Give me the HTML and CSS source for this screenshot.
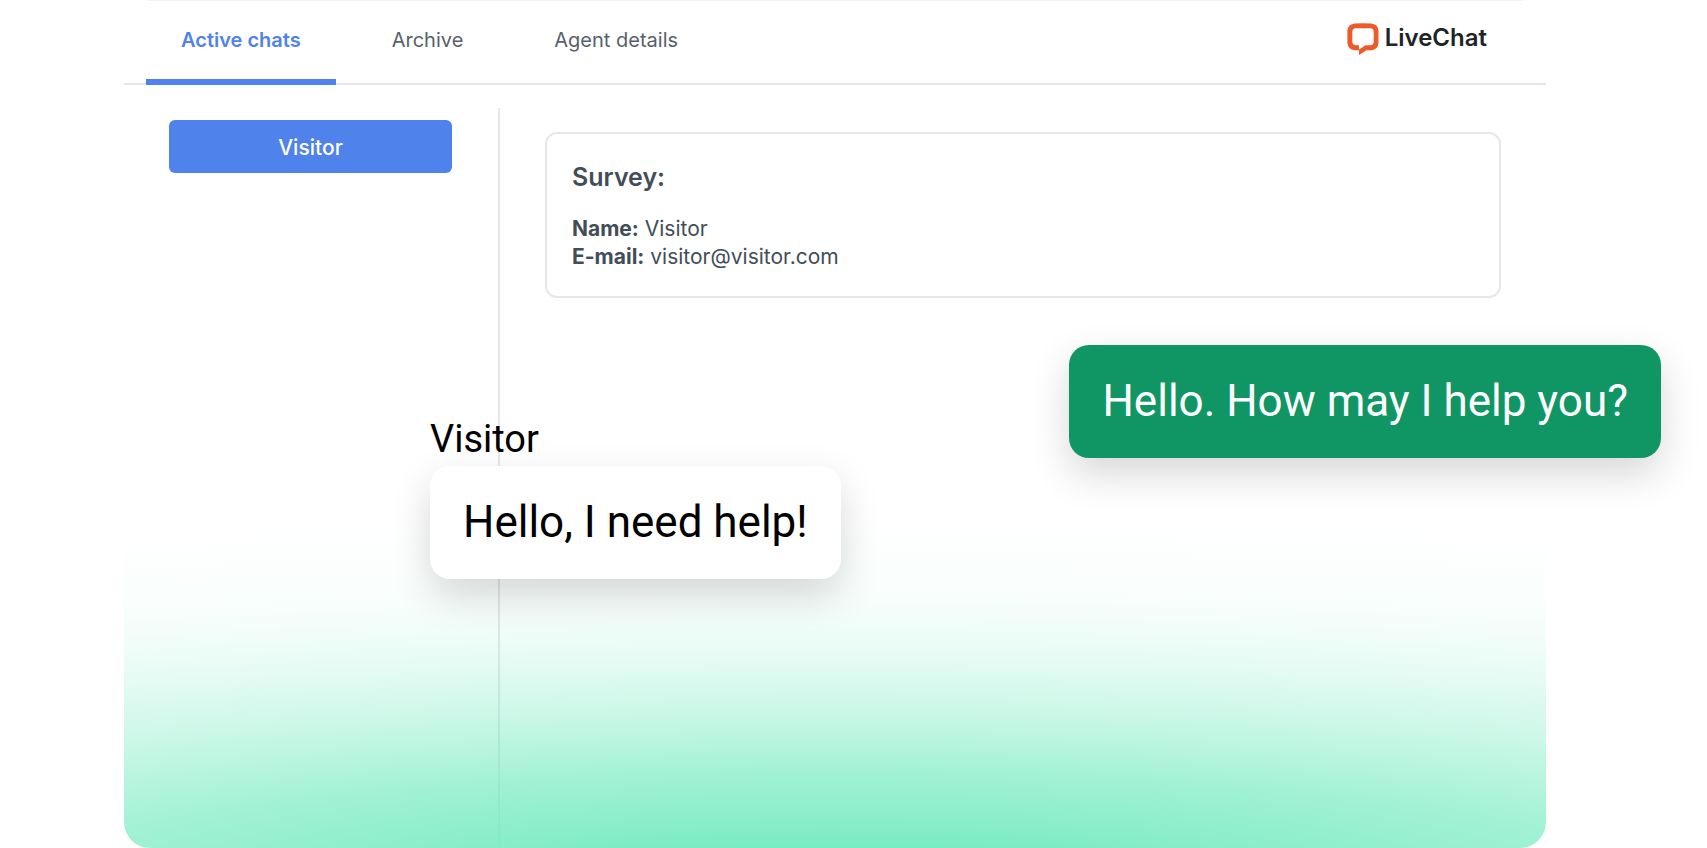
FILE: index.html
```html
<!DOCTYPE html>
<html lang="en">
<head>
<meta charset="utf-8">
<title>LiveChat</title>
<link rel="stylesheet" href="styles.css">
</head>
<body>
<main class="stage">
  <section class="panel">
    <header class="topbar">
      <nav class="tabs">
        <a class="tab tab-active" href="#active">Active chats</a>
        <a class="tab" href="#archive">Archive</a>
        <a class="tab" href="#agent">Agent details</a>
      </nav>
      <a class="logo" href="#home">
        <svg class="logo-mark" viewBox="0 0 32 32" aria-hidden="true">
          <path fill="#ee5a29" fill-rule="evenodd" d="M8 .4Q16 0 24 .4Q31 1 31.500 7.500V20Q31 26.600 24.500 27.200H19.500L12 32V27.200H7.500Q1 26.600 .4 20V7.500Q1 1 8 .4ZM8.500 5.300Q16 5 23.500 5.300Q26.500 5.500 26.700 8.500V19Q26.500 21.800 23.700 22.200H18.500L12 26.500V22.200H8Q5.500 21.800 5.300 19V8.500Q5.500 5.500 8.500 5.300Z"/>
        </svg>
        <span class="logo-name">LiveChat</span>
      </a>
    </header>
    <div class="body">
      <aside class="sidebar">
        <button class="visitor" type="button">Visitor</button>
      </aside>
      <div class="conversation">
        <article class="survey">
          <h2 class="survey-title">Survey:</h2>
          <p class="survey-row"><strong>Name:</strong> Visitor</p>
          <p class="survey-row"><strong>E-mail:</strong> visitor@visitor.com</p>
        </article>
      </div>
    </div>
  </section>
  <div class="message message-visitor">
    <span class="author">Visitor</span>
    <p class="bubble">Hello, I need help!</p>
  </div>
  <div class="message message-agent">
    <p class="bubble bubble-agent">Hello. How may I help you?</p>
  </div>
</main>
</body>
</html>
```
FILE: styles.css
```css
* { box-sizing: border-box; }

body {
  margin: 0;
  background: #fff;
  color: #424d57;
  font-family: Inter, "Liberation Sans", sans-serif;
  font-size: 20px;
}

p, h2 { margin: 0; }

.stage {
  position: relative;
  display: flex;
  min-height: 100vh;
  padding: 0 161px 0 124px;
}

.panel {
  position: relative;
  display: flex;
  flex: 1;
  flex-direction: column;
  overflow: hidden;
  border-radius: 0 0 26px 26px;
}

/* green glow rising from the bottom edge */
.panel::after {
  content: "";
  position: absolute;
  inset: 0;
  pointer-events: none;
  background: radial-gradient(2600px 374px at 50% calc(100% + 40px),
    rgba(112, 234, 190, 0.96) 0,
    rgba(112, 234, 190, 0.95) 11%,
    rgba(112, 234, 190, 0.8) 20%,
    rgba(112, 234, 190, 0.65) 31%,
    rgba(112, 234, 190, 0.49) 40%,
    rgba(112, 234, 190, 0.33) 50%,
    rgba(112, 234, 190, 0.19) 61%,
    rgba(112, 234, 190, 0.1) 70%,
    rgba(112, 234, 190, 0.04) 80%,
    rgba(112, 234, 190, 0) 100%);
}

.topbar {
  display: flex;
  justify-content: space-between;
  height: 85px;
  padding: 0 59px 0 22px;
  border-bottom: 2px solid #e2e6ec;
  background: linear-gradient(#f2f3f4, #f2f3f4) 23px 0 / calc(100% - 46px) 1px no-repeat;
}

.tabs { display: flex; gap: 21px; }

.tab {
  height: 85px;
  padding: 0 35px;
  color: #57616b;
  line-height: 80px;
  text-decoration: none;
}

.tab-active {
  border-bottom: 6px solid #5082ec;
  color: #5082ec;
  font-weight: 600;
}

.logo {
  display: flex;
  align-items: center;
  gap: 6px;
  height: 78px;
  color: #202327;
  font-size: 24px;
  font-weight: 600;
  line-height: 32px;
  text-decoration: none;
}

.logo-mark { width: 32px; height: 32px; }
.logo-name { padding-bottom: 2px; }

.body { display: flex; flex: 1; padding-top: 23px; }

.sidebar {
  width: 376px;
  padding: 12px 46px 0 45px;
  border-right: 2px solid #e4e8ea;
}

.visitor {
  width: 100%;
  height: 53px;
  padding: 2px 0 0;
  border: 0;
  border-radius: 6px;
  background: #5082ec;
  color: #fff;
  font: 500 21px Inter, sans-serif;
}

.conversation { flex: 1; padding: 24px 45px 0 45px; }

.survey {
  padding: 25px;
  border: 2px solid #e4e8ea;
  border-radius: 12px;
}

.survey-title {
  margin-bottom: 20px;
  font-size: 25px;
  font-weight: 600;
  line-height: 36px;
}

.survey-row { font-size: 21px; line-height: 28px; }

.message {
  position: absolute;
  color: #000;
  font-family: Roboto, sans-serif;
}

.message-visitor { top: 412px; left: 430px; }
.message-agent { top: 345px; right: 46px; }

.author {
  display: block;
  font-size: 38px;
  line-height: 54px;
}

.bubble {
  padding: 28px 33px;
  border-radius: 20px;
  background: #fff;
  box-shadow: 0 16px 40px rgba(0, 0, 0, 0.16);
  font-size: 44px;
  line-height: 57px;
  white-space: nowrap;
}

.bubble-agent { background: #109664; color: #fff; }
```
